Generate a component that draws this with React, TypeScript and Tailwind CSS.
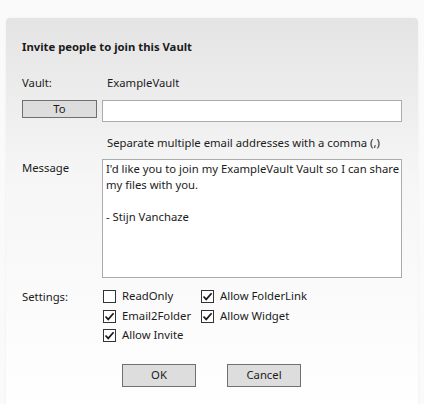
import { useState } from "react";

type Setting = { label: string; checked: boolean };

const settingsLeft: Setting[] = [
  { label: "ReadOnly", checked: false },
  { label: "Email2Folder", checked: true },
  { label: "Allow Invite", checked: true },
];

const settingsRight: Setting[] = [
  { label: "Allow FolderLink", checked: true },
  { label: "Allow Widget", checked: true },
];

function CheckBox({ label, checked }: Setting) {
  const [on, setOn] = useState(checked);
  return (
    <label className="flex items-center h-[19.5px] cursor-default select-none" onClick={() => setOn(!on)}>
      <span className="w-[13px] h-[13px] border border-[#333333] bg-white flex items-center justify-center">
        {on && (
          <svg width="11" height="11" viewBox="0 0 11 11">
            <path d="M1.5 5.5 L4.2 8.4 L9.6 2.2" fill="none" stroke="#1a1a1a" strokeWidth="1.7" />
          </svg>
        )}
      </span>
      <span className="ml-[6px]">{label}</span>
    </label>
  );
}

export default function App() {
  return (
    <div
      className="w-[424px] h-[404px] bg-[#fafafa] pt-[18px] px-[6px] overflow-hidden text-[11.3px] text-[#1b1b1b]"
      style={{ fontFamily: '"Segoe UI", "Noto Sans", sans-serif' }}
    >
      <div className="h-[400px] rounded-t-[4px] bg-gradient-to-b from-[#e4e4e4] via-[#f6f6f6] via-40% to-white shadow-[0_0_2px_rgba(0,0,0,0.08)] pl-[16px] pr-[16px]">
        <h1 className="font-bold pt-[20px] leading-[18px]">Invite people to join this Vault</h1>

        {/* vault name */}
        <div className="flex mt-[19px] leading-[16px]">
          <span className="w-[85px]">Vault:</span>
          <span>ExampleVault</span>
        </div>

        {/* recipients */}
        <div className="flex items-start mt-[9px]">
          <button className="w-[75px] h-[18px] bg-[#dddddd] border border-[#707070] leading-[16px]">To</button>
          <input className="ml-[5px] w-[300px] h-[22px] bg-white border border-[#ababab] outline-none px-[3px]" />
        </div>
        <p className="ml-[85px] mt-[13px] leading-[16px]">Separate multiple email addresses with a comma (,)</p>

        {/* message */}
        <div className="flex mt-[8px]">
          <span className="w-[80px] pt-[1px] leading-[16px]">Message</span>
          <div className="w-[300px] h-[119px] bg-white border border-[#ababab] px-[3px] pt-[1px] leading-[16px] whitespace-nowrap">
            <div>I'd like you to join my ExampleVault Vault so I can share</div>
            <div>my files with you.</div>
            <div className="h-[16px]" />
            <div>- Stijn Vanchaze</div>
          </div>
        </div>

        {/* settings */}
        <div className="flex mt-[9px]">
          <span className="w-[81px] pt-[2px] leading-[16px]">Settings:</span>
          <div className="flex">
            <div className="flex flex-col w-[98px]">
              {settingsLeft.map((s) => (
                <CheckBox key={s.label} {...s} />
              ))}
            </div>
            <div className="flex flex-col">
              {settingsRight.map((s) => (
                <CheckBox key={s.label} {...s} />
              ))}
            </div>
          </div>
        </div>

        <div className="flex gap-[31px] ml-[100px] mt-[18px]">
          <button className="w-[74px] h-[23px] bg-[#dddddd] border border-[#707070]">OK</button>
          <button className="w-[74px] h-[23px] bg-[#dddddd] border border-[#707070]">Cancel</button>
        </div>
      </div>
    </div>
  );
}
